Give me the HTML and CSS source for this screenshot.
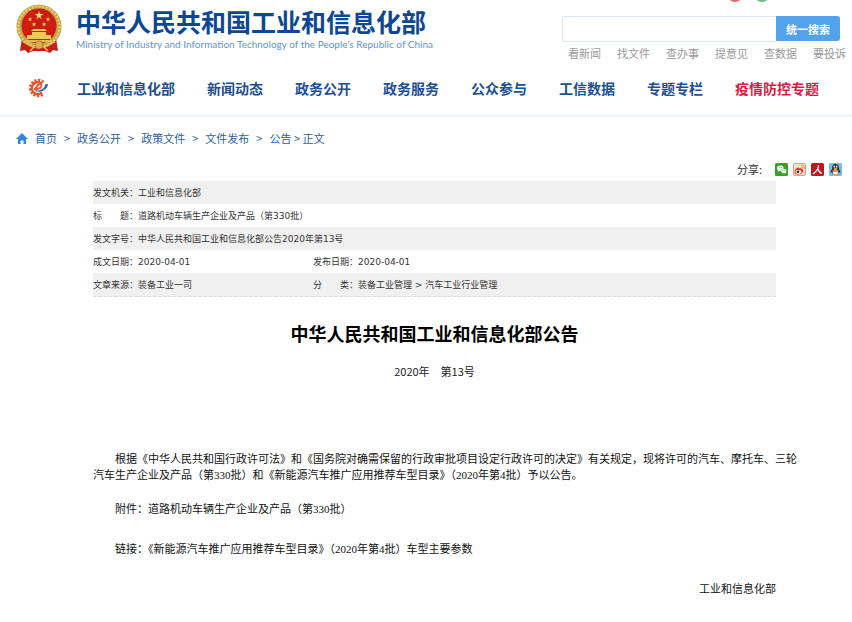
FILE: index.html
```html
<!DOCTYPE html>
<html lang="zh-CN">
<head>
    <meta charset="UTF-8">
    <meta name="viewport" content="width=device-width, initial-scale=1.0">
    <title>中华人民共和国工业和信息化部公告</title>
    <link rel="stylesheet" href="styles.css">
</head>
<body>
    <header class="header">
        <div class="masthead">
            <svg class="emblem" viewBox="0 0 46 50" aria-hidden="true">
                <path d="M6 34h34l2 13-5-1-3 3-5-2h-12l-5 2-3-3-5 1z" fill="#c81d18"/>
                <ellipse cx="23" cy="22.500" rx="22.500" ry="22" fill="#c9a548"/>
                <ellipse cx="23" cy="22.500" rx="20.500" ry="20" fill="none" stroke="#e8d27c" stroke-width="2" stroke-dasharray="2 1.500"/>
                <circle cx="23" cy="22" r="17.500" fill="#d01a14"/>
                <path d="M23 7l1.100 3h3.200l-2.600 2 1 3.200-2.700-2-2.700 2 1-3.200-2.600-2h3.200z" fill="#f3d85e"/>
                <g fill="#f3d85e">
                    <path id="star" d="M14 13l.6 1.500h1.700l-1.300 1 .5 1.700-1.500-1-1.500 1 .5-1.700-1.300-1h1.700z"/>
                    <use href="#star" x="18"/>
                    <use href="#star" x="4" y="5"/>
                    <use href="#star" x="14" y="5"/>
                </g>
                <path d="M17 25h12l2 2h-16zM16 28h14v3H16zM11 31h24v4H11z" fill="#eccb58"/>
                <path d="M9 37h28" stroke="#e3bd4f" stroke-width="2"/>
                <circle cx="23" cy="41" r="4" fill="#d3b14e" stroke="#c81d18" stroke-dasharray="1 1"/>
                <path d="M7 38q7 2 11 6M39 38q-7 2-11 6M14 47l4-4M32 47l-4-4" fill="none" stroke="#e0bd55" stroke-width="1.500"/>
            </svg>
            <div class="site-name">
                <div class="site-title">中华人民共和国工业和信息化部</div>
                <div class="site-title-en">Ministry of Industry and Information Technology of the People's Republic of China</div>
            </div>
            <div class="search-area">
                <svg class="social" viewBox="0 0 42 2" aria-hidden="true">
                    <circle cx="8" cy="-6" r="8" fill="#e66a62"/>
                    <circle cx="35" cy="-6" r="8" fill="#6fbb83"/>
                </svg>
                <form class="search">
                    <input class="search-input" type="text" aria-label="统一搜索">
                    <button class="search-button" type="button">统一搜索</button>
                </form>
                <div class="quick-links">
                    <a href="#">看新闻</a>
                    <a href="#">找文件</a>
                    <a href="#">查办事</a>
                    <a href="#">提意见</a>
                    <a href="#">查数据</a>
                    <a href="#">要投诉</a>
                </div>
            </div>
        </div>
        <nav class="nav">
            <svg class="nav-logo" viewBox="0 0 22 20" aria-hidden="true">
                <path d="M16 4.500A7.300 7.300 0 1 0 16 15.500" fill="none" stroke="#e8552a" stroke-width="4" stroke-dasharray="2 1.300"/>
                <path d="M14.500 5.500A6 6 0 1 0 15 14.500" fill="none" stroke="#e8552a" stroke-width="2.300"/>
                <path d="M7 11q8 0 7.500-3.500Q13.500 5 10.500 7.500 7 11 10 13" fill="none" stroke="#e8552a" stroke-width="1.800"/>
                <path d="M8.500 12.500q3.500 2.500 8 0 4.500-3 4.500-6.500l-3 .5q0 3-3.500 5-3 1.500-6 1z" fill="#2a6eb0"/>
            </svg>
            <a href="#">工业和信息化部</a>
            <a href="#">新闻动态</a>
            <a href="#">政务公开</a>
            <a href="#">政务服务</a>
            <a href="#">公众参与</a>
            <a href="#">工信数据</a>
            <a href="#">专题专栏</a>
            <a href="#" class="hot">疫情防控专题</a>
        </nav>
    </header>

    <div class="breadcrumb">
        <svg class="home" viewBox="0 0 12 11" aria-hidden="true">
            <path d="M6 0l6 6h-2v5H7.500V7.500h-3V11H2V6H0z" fill="#2f86dc"/>
        </svg>
        <a href="#">首页</a>
        <span>&gt;</span>
        <a href="#">政务公开</a>
        <span>&gt;</span>
        <a href="#">政策文件</a>
        <span>&gt;</span>
        <a href="#">文件发布</a>
        <span>&gt;</span>
        <span class="current"><a href="#">公告</a> &gt; 正文</span>
    </div>

    <div class="share">
        <span class="share-label">分享:</span>
        <a href="#" aria-label="微信">
            <svg viewBox="0 0 13 13">
                <rect width="13" height="13" rx="1.500" fill="#35a322"/>
                <ellipse cx="5.300" cy="5.300" rx="3.300" ry="2.700" fill="#fff"/>
                <path d="M3 7l0 2 2-1.500z" fill="#fff"/>
                <ellipse cx="8.700" cy="8" rx="2.900" ry="2.300" fill="#fff" stroke="#35a322" stroke-width=".5"/>
                <path d="M9.500 9.500l1.500 1.300V9z" fill="#fff"/>
                <path d="M4 4.500h.8M6 4.500h.8M7.500 7.500h.6M9.400 7.500h.6" stroke="#35a322" stroke-width=".8"/>
            </svg>
        </a>
        <a href="#" aria-label="微博">
            <svg viewBox="0 0 13 13">
                <rect x=".5" y=".5" width="12" height="12" rx="1.500" fill="#fbe0cc" stroke="#e39a88"/>
                <path d="M1.500 8.500Q2 6 5 4.500q1.500-.5 1 1 3-1 3 .8 2 .7 1 2.500Q8.500 11.500 5 11.500t-3.500-3z" fill="#d5261e"/>
                <ellipse cx="5.400" cy="8.700" rx="2.900" ry="2" fill="#fff"/>
                <circle cx="5" cy="8.800" r="1.300" fill="#222"/>
                <path d="M8 2q3.500-.2 3.300 3.800M8.200 3.900q1.400 0 1.400 1.600" fill="none" stroke="#ee8b2c"/>
            </svg>
        </a>
        <a href="#" aria-label="人民微博">
            <svg viewBox="0 0 13 13">
                <rect width="13" height="13" rx="1.500" fill="#c5141a"/>
                <path d="M7.500 2q.5 4.500-5.500 9M7 6q1 3.500 4 4.500" fill="none" stroke="#fff" stroke-width="1.200"/>
            </svg>
        </a>
        <a href="#" aria-label="QQ">
            <svg viewBox="0 0 13 13">
                <rect width="13" height="13" rx="1.500" fill="#76bce8"/>
                <path d="M3 6Q3 1 6.500 1T10 6q2 2.500 1.300 4l-1.300-1q-.5 3-3.500 3T3 9l-1.300 1Q1 8.500 3 6z" fill="#26262b"/>
                <ellipse cx="6.500" cy="9" rx="2.700" ry="2.700" fill="#fff"/>
                <path d="M3 6.500q3.500 2 7 0v1.300q-3.500 2-7 0z" fill="#dc3d25"/>
                <ellipse cx="5.300" cy="3.700" rx=".8" ry="1.100" fill="#fff"/>
                <ellipse cx="7.700" cy="3.700" rx=".8" ry="1.100" fill="#fff"/>
                <ellipse cx="6.500" cy="5.700" rx="2" ry=".7" fill="#f2a823"/>
                <path d="M3.500 12h2.500M7 12h2.500" stroke="#f2a823" stroke-width="1.200"/>
            </svg>
        </a>
    </div>

    <main class="article">
        <table class="meta">
            <colgroup>
                <col class="col-label">
                <col class="col-value">
                <col class="col-label">
                <col>
            </colgroup>
            <tr>
                <th>发文机关：</th>
                <td colspan="3">工业和信息化部</td>
            </tr>
            <tr>
                <th>标　　题：</th>
                <td colspan="3">道路机动车辆生产企业及产品（第330批）</td>
            </tr>
            <tr>
                <th>发文字号：</th>
                <td colspan="3">中华人民共和国工业和信息化部公告2020年第13号</td>
            </tr>
            <tr>
                <th>成文日期：</th>
                <td>2020-04-01</td>
                <th>发布日期：</th>
                <td>2020-04-01</td>
            </tr>
            <tr>
                <th>文章来源：</th>
                <td>装备工业一司</td>
                <th>分　　类：</th>
                <td>装备工业管理 &gt; 汽车工业行业管理</td>
            </tr>
        </table>

        <h1>中华人民共和国工业和信息化部公告</h1>
        <p class="issue">2020年　第13号</p>

        <div class="content">
            <p class="notice">根据《中华人民共和国行政许可法》和《国务院对确需保留的行政审批项目设定行政许可的决定》有关规定，现将许可的汽车、摩托车、三轮汽车生产企业及产品（第330批）和《新能源汽车推广应用推荐车型目录》（2020年第4批）予以公告。</p>
            <p>附件：道路机动车辆生产企业及产品（第330批）</p>
            <p class="related">链接：《新能源汽车推广应用推荐车型目录》（2020年第4批）车型主要参数</p>
            <p class="signature">工业和信息化部</p>
        </div>
    </main>
</body>
</html>
```

FILE: styles.css
```css
body {
    margin: 0;
    background-color: #fff;
    color: #333;
    font-family: "Noto Sans CJK SC", sans-serif;
    font-size: 11px;
}

a {
    color: inherit;
    text-decoration: none;
}

svg {
    display: block;
    flex-shrink: 0;
}

/* header */
.header {
    border-bottom: 3px solid #eff4f8;
}

.masthead {
    display: flex;
    padding: 0 6px 0 16px;
    height: 64px;
}

.emblem {
    width: 46px;
    height: 50px;
    margin-top: 4px;
}

.site-name {
    margin: 7px 0 0 14px;
    white-space: nowrap;
}

.site-title {
    font-size: 25px;
    font-weight: bold;
    line-height: 28px;
    color: #0c4795;
}

.site-title-en {
    font-family: Lato, "Liberation Sans", sans-serif;
    font-size: 10px;
    line-height: 18px;
    color: #6394cc;
}

.search-area {
    width: 284px;
    margin-left: auto;
}

.social {
    width: 42px;
    height: 2px;
    margin-left: 165px;
}

.search {
    display: flex;
    margin: 14px 6px 0 0;
}

.search-input {
    flex: 1;
    min-width: 0;
    height: 26px;
    box-sizing: border-box;
    border: 1px solid #dce6f0;
    border-right: none;
    border-radius: 3px 0 0 3px;
    padding: 0 8px;
    font-size: 11px;
}

.search-button {
    width: 64px;
    height: 25px;
    padding: 0;
    border: none;
    border-radius: 0 3px 3px 0;
    background-color: #53a3ea;
    color: #fff;
    font-family: inherit;
    font-size: 11px;
    font-weight: bold;
    cursor: pointer;
}

.quick-links {
    display: flex;
    justify-content: flex-end;
    gap: 16px;
    margin-top: 3px;
    line-height: 16px;
    color: #999;
    white-space: nowrap;
}

.nav {
    display: flex;
    align-items: center;
    gap: 32px;
    height: 48px;
    padding: 0 0 2px 27px;
    font-size: 14px;
    font-weight: bold;
    color: #1d4f91;
    white-space: nowrap;
}

.nav-logo {
    width: 22px;
    height: 20px;
    margin-right: -4px;
}

.nav .hot {
    color: #d01f45;
}

/* breadcrumb */
.breadcrumb {
    display: flex;
    align-items: center;
    gap: 7px;
    padding: 13px 16px 0;
    line-height: 16px;
    color: #2a5f9e;
}

.home {
    width: 12px;
    height: 11px;
}

/* share */
.share {
    display: flex;
    justify-content: flex-end;
    align-items: center;
    gap: 5px;
    padding: 15px 10px 4px;
    line-height: 16px;
}

.share-label {
    margin-right: 8px;
}

.share svg {
    width: 13px;
    height: 13px;
}

/* article */
.article {
    margin: 0 76px 0 93px;
}

.meta {
    width: 100%;
    border-collapse: collapse;
    border-bottom: 1px dashed #ddd;
    table-layout: fixed;
    font-family: "DejaVu Sans", "Noto Sans CJK SC", sans-serif;
    font-size: 9px;
    line-height: 20px;
}

.meta th,
.meta td {
    height: 23px;
    padding: 0;
    font-weight: normal;
    text-align: left;
    white-space: nowrap;
}

.meta tr:nth-child(odd) {
    background-color: #f0f0f0;
}

.col-label {
    width: 45px;
}

.col-value {
    width: 175px;
}

h1 {
    margin: 22px 0 0;
    color: #000;
    font-size: 18px;
    line-height: 28px;
    text-align: center;
}

.issue {
    margin: 16px 0 0;
    color: #222;
    line-height: 16px;
    text-align: center;
}

.content {
    margin-top: 72px;
    color: #111;
    font-family: "Liberation Serif", "Noto Sans CJK SC", serif;
    line-height: 16px;
}

.content p {
    margin: 0 0 18px;
    text-indent: 2em;
}

/* leave room for two more characters per line */
.content .notice {
    margin-right: -22px;
}

.content .related {
    margin: 24px 0;
}

.content .signature {
    margin: 0;
    text-align: right;
}
```
